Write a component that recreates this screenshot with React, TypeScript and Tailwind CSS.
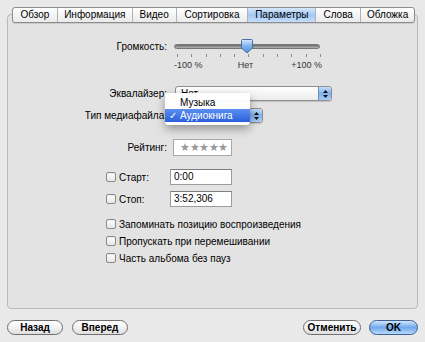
import React from "react";

const tabs = [
  { t: "Обзор", w: 45 },
  { t: "Информация", w: 75 },
  { t: "Видео", w: 44 },
  { t: "Сортировка", w: 72 },
  { t: "Параметры", w: 68, active: true },
  { t: "Слова", w: 45 },
  { t: "Обложка", w: 54 },
];

function Arrows() {
  return (
    <svg width="7" height="10" viewBox="0 0 7 10">
      <path d="M3.5 1 L6 4 L1 4 Z" fill="#111" />
      <path d="M3.5 9 L6 6 L1 6 Z" fill="#111" />
    </svg>
  );
}

function Select({ w, text }: { w: number; text: string }) {
  return (
    <div
      className="flex h-[15px] rounded-[3px] border border-[#8f8f8f] bg-gradient-to-b from-white to-[#ececec] shadow-[0_1px_1px_rgba(0,0,0,0.15)] overflow-hidden"
      style={{ width: w }}
    >
      <div className="flex-1 pl-[5px] text-[10px] leading-[13px]">{text}</div>
      <div className="w-[13px] h-full flex items-center justify-center rounded-r-[2px] bg-gradient-to-b from-[#c5dcf7] via-[#7fb0ee] to-[#a9cdf5] border-l border-[#6d8fbf]">
        <Arrows />
      </div>
    </div>
  );
}

function Check() {
  return (
    <div className="w-[10px] h-[10px] rounded-[2px] border border-[#8a8a8a] bg-gradient-to-b from-white to-[#e6e6e6] shadow-[inset_0_1px_1px_rgba(0,0,0,0.08)]" />
  );
}

function Field({ w, text }: { w: number; text: string }) {
  return (
    <div
      className="h-[16px] bg-white border border-[#9c9c9c] border-t-[#7d7d7d] pl-[3px] text-[10px] leading-[14px]"
      style={{ width: w }}
    >
      {text}
    </div>
  );
}

function Button({ w, text, primary }: { w: number; text: string; primary?: boolean }) {
  return (
    <div
      className={
        "h-[15px] rounded-full border flex items-center justify-center text-[10px] font-bold leading-none " +
        (primary
          ? "border-[#3f5f8f] bg-gradient-to-b from-[#d3e6fb] via-[#6fa8ec] to-[#b8dafc]"
          : "border-[#6f6f6f] bg-gradient-to-b from-white via-[#f2f2f2] to-[#dedede]")
      }
      style={{ width: w }}
    >
      {text}
    </div>
  );
}

export default function App() {
  const ticks = Array.from({ length: 11 });
  return (
    <div className="relative w-[425px] h-[342px] bg-[#e9e9e9] pt-[7px] text-black font-['Liberation_Sans',Arial,sans-serif] overflow-hidden">
      {/* tabs */}
      <div className="relative z-10 ml-[12px] w-[403px] h-[16px] flex rounded-[3px] border border-[#8c8c8c] bg-gradient-to-b from-white to-[#eaeaea] shadow-[0_1px_1px_rgba(0,0,0,0.12)] overflow-hidden">
        {tabs.map((tab, i) => (
          <div
            key={tab.t}
            className={
              "h-full flex items-center justify-center text-[10px] leading-none " +
              (i > 0 ? "border-l border-[#b2b2b2] " : "") +
              (tab.active ? "bg-gradient-to-b from-[#d6e7fb] via-[#a3c8f3] to-[#c6defa]" : "")
            }
            style={{ width: tab.w - (i === 0 ? 1 : 0) }}
          >
            {tab.t}
          </div>
        ))}
      </div>

      {/* panel */}
      <div className="-mt-[9px] ml-[7px] w-[411px] h-[295px] rounded-[4px] border border-[#b9b9b9] bg-[#e3e3e3] flex flex-col">
        {/* volume */}
        <div className="mt-[24px] flex items-center h-[14px]">
          <div className="w-[159px] text-right text-[10px]">Громкость:</div>
          <div className="ml-[7px] w-[146px] relative h-[14px] flex items-center">
            <div className="w-full h-[5px] rounded-full bg-gradient-to-b from-[#6b6b6b] to-[#b4b4b4] border border-[#777]" />
            <svg className="absolute left-[67px] top-0" width="12" height="15" viewBox="0 0 12 15">
              <defs>
                <linearGradient id="th" x1="0" y1="0" x2="0" y2="1">
                  <stop offset="0" stopColor="#d7e8fc" />
                  <stop offset="0.5" stopColor="#7eb1ee" />
                  <stop offset="1" stopColor="#4f8ee0" />
                </linearGradient>
              </defs>
              <path d="M1.5 0.5 H10.5 Q11.5 0.5 11.5 1.5 V9 L6 14 L0.5 9 V1.5 Q0.5 0.5 1.5 0.5 Z" fill="url(#th)" stroke="#4a6ea3" />
            </svg>
          </div>
        </div>
        <div className="ml-[168px] w-[146px] mt-[1px] flex justify-between px-[1px] h-[4px]">
          {ticks.map((_, i) => (
            <div key={i} className="w-[1px] h-[3px] bg-[#8c8c8c]" />
          ))}
        </div>
        <div className="ml-[166px] w-[148px] mt-[2px] flex justify-between text-[9px] leading-[10px] text-[#333]">
          <span>-100 %</span>
          <span className="mr-[3px]">Нет</span>
          <span>+100 %</span>
        </div>

        {/* equalizer */}
        <div className="mt-[16px] flex items-center h-[15px]">
          <div className="w-[159px] text-right text-[10px]">Эквалайзер:</div>
          <div className="ml-[8px]">
            <Select w={157} text="Нет" />
          </div>
        </div>

        {/* type */}
        <div className="mt-[7px] flex items-center h-[15px]">
          <div className="w-[159px] text-right text-[10px]">Тип медиафайла:</div>
          <div className="ml-[8px]">
            <Select w={88} text="Аудиокнига" />
          </div>
        </div>

        {/* rating */}
        <div className="mt-[16px] flex items-center h-[17px]">
          <div className="w-[159px] text-right text-[10px]">Рейтинг:</div>
          <div className="ml-[6px] w-[59px] h-[17px] bg-white border border-[#a8a8a8] pl-[6px] text-[11px] leading-[15px] tracking-[-0.5px] text-[#9a9a9a]">
            ★★★★★
          </div>
        </div>

        {/* start */}
        <div className="mt-[13px] flex items-center h-[16px]">
          <div className="ml-[98px]"><Check /></div>
          <div className="ml-[3px] w-[51px] text-[10px]">Старт:</div>
          <Field w={62} text="0:00" />
        </div>
        <div className="mt-[6px] flex items-center h-[16px]">
          <div className="ml-[98px]"><Check /></div>
          <div className="ml-[3px] w-[51px] text-[10px]">Стоп:</div>
          <Field w={62} text="3:52,306" />
        </div>

        <div className="mt-[11px] flex flex-col gap-[5px]">
          {["Запоминать позицию воспроизведения", "Пропускать при перемешивании", "Часть альбома без пауз"].map((t) => (
            <div key={t} className="flex items-center h-[12px]">
              <div className="ml-[98px]"><Check /></div>
              <div className="ml-[3px] text-[10px]">{t}</div>
            </div>
          ))}
        </div>
      </div>

      {/* buttons */}
      <div className="mt-[11px] flex items-center px-[7px]">
        <Button w={56} text="Назад" />
        <div className="ml-[9px]"><Button w={56} text="Вперед" /></div>
        <div className="ml-auto"><Button w={58} text="Отменить" /></div>
        <div className="ml-[8px]"><Button w={49} text="OK" primary /></div>
      </div>

      {/* popup menu */}
      <div className="absolute left-[165px] top-[93px] w-[85px] pt-[3px] pb-[3px] bg-white/95 rounded-b-[4px] shadow-[0_4px_10px_rgba(0,0,0,0.35)] z-20">
        <div className="h-[13px] pl-[15px] text-[10px] leading-[13px]">Музыка</div>
        <div className="h-[13px] flex items-center bg-gradient-to-b from-[#5d8ff0] to-[#2a5fdc] text-white text-[10px] leading-none">
          <span className="w-[15px] pl-[4px] text-[10px]">✓</span>
          <span>Аудиокнига</span>
        </div>
      </div>
    </div>
  );
}
